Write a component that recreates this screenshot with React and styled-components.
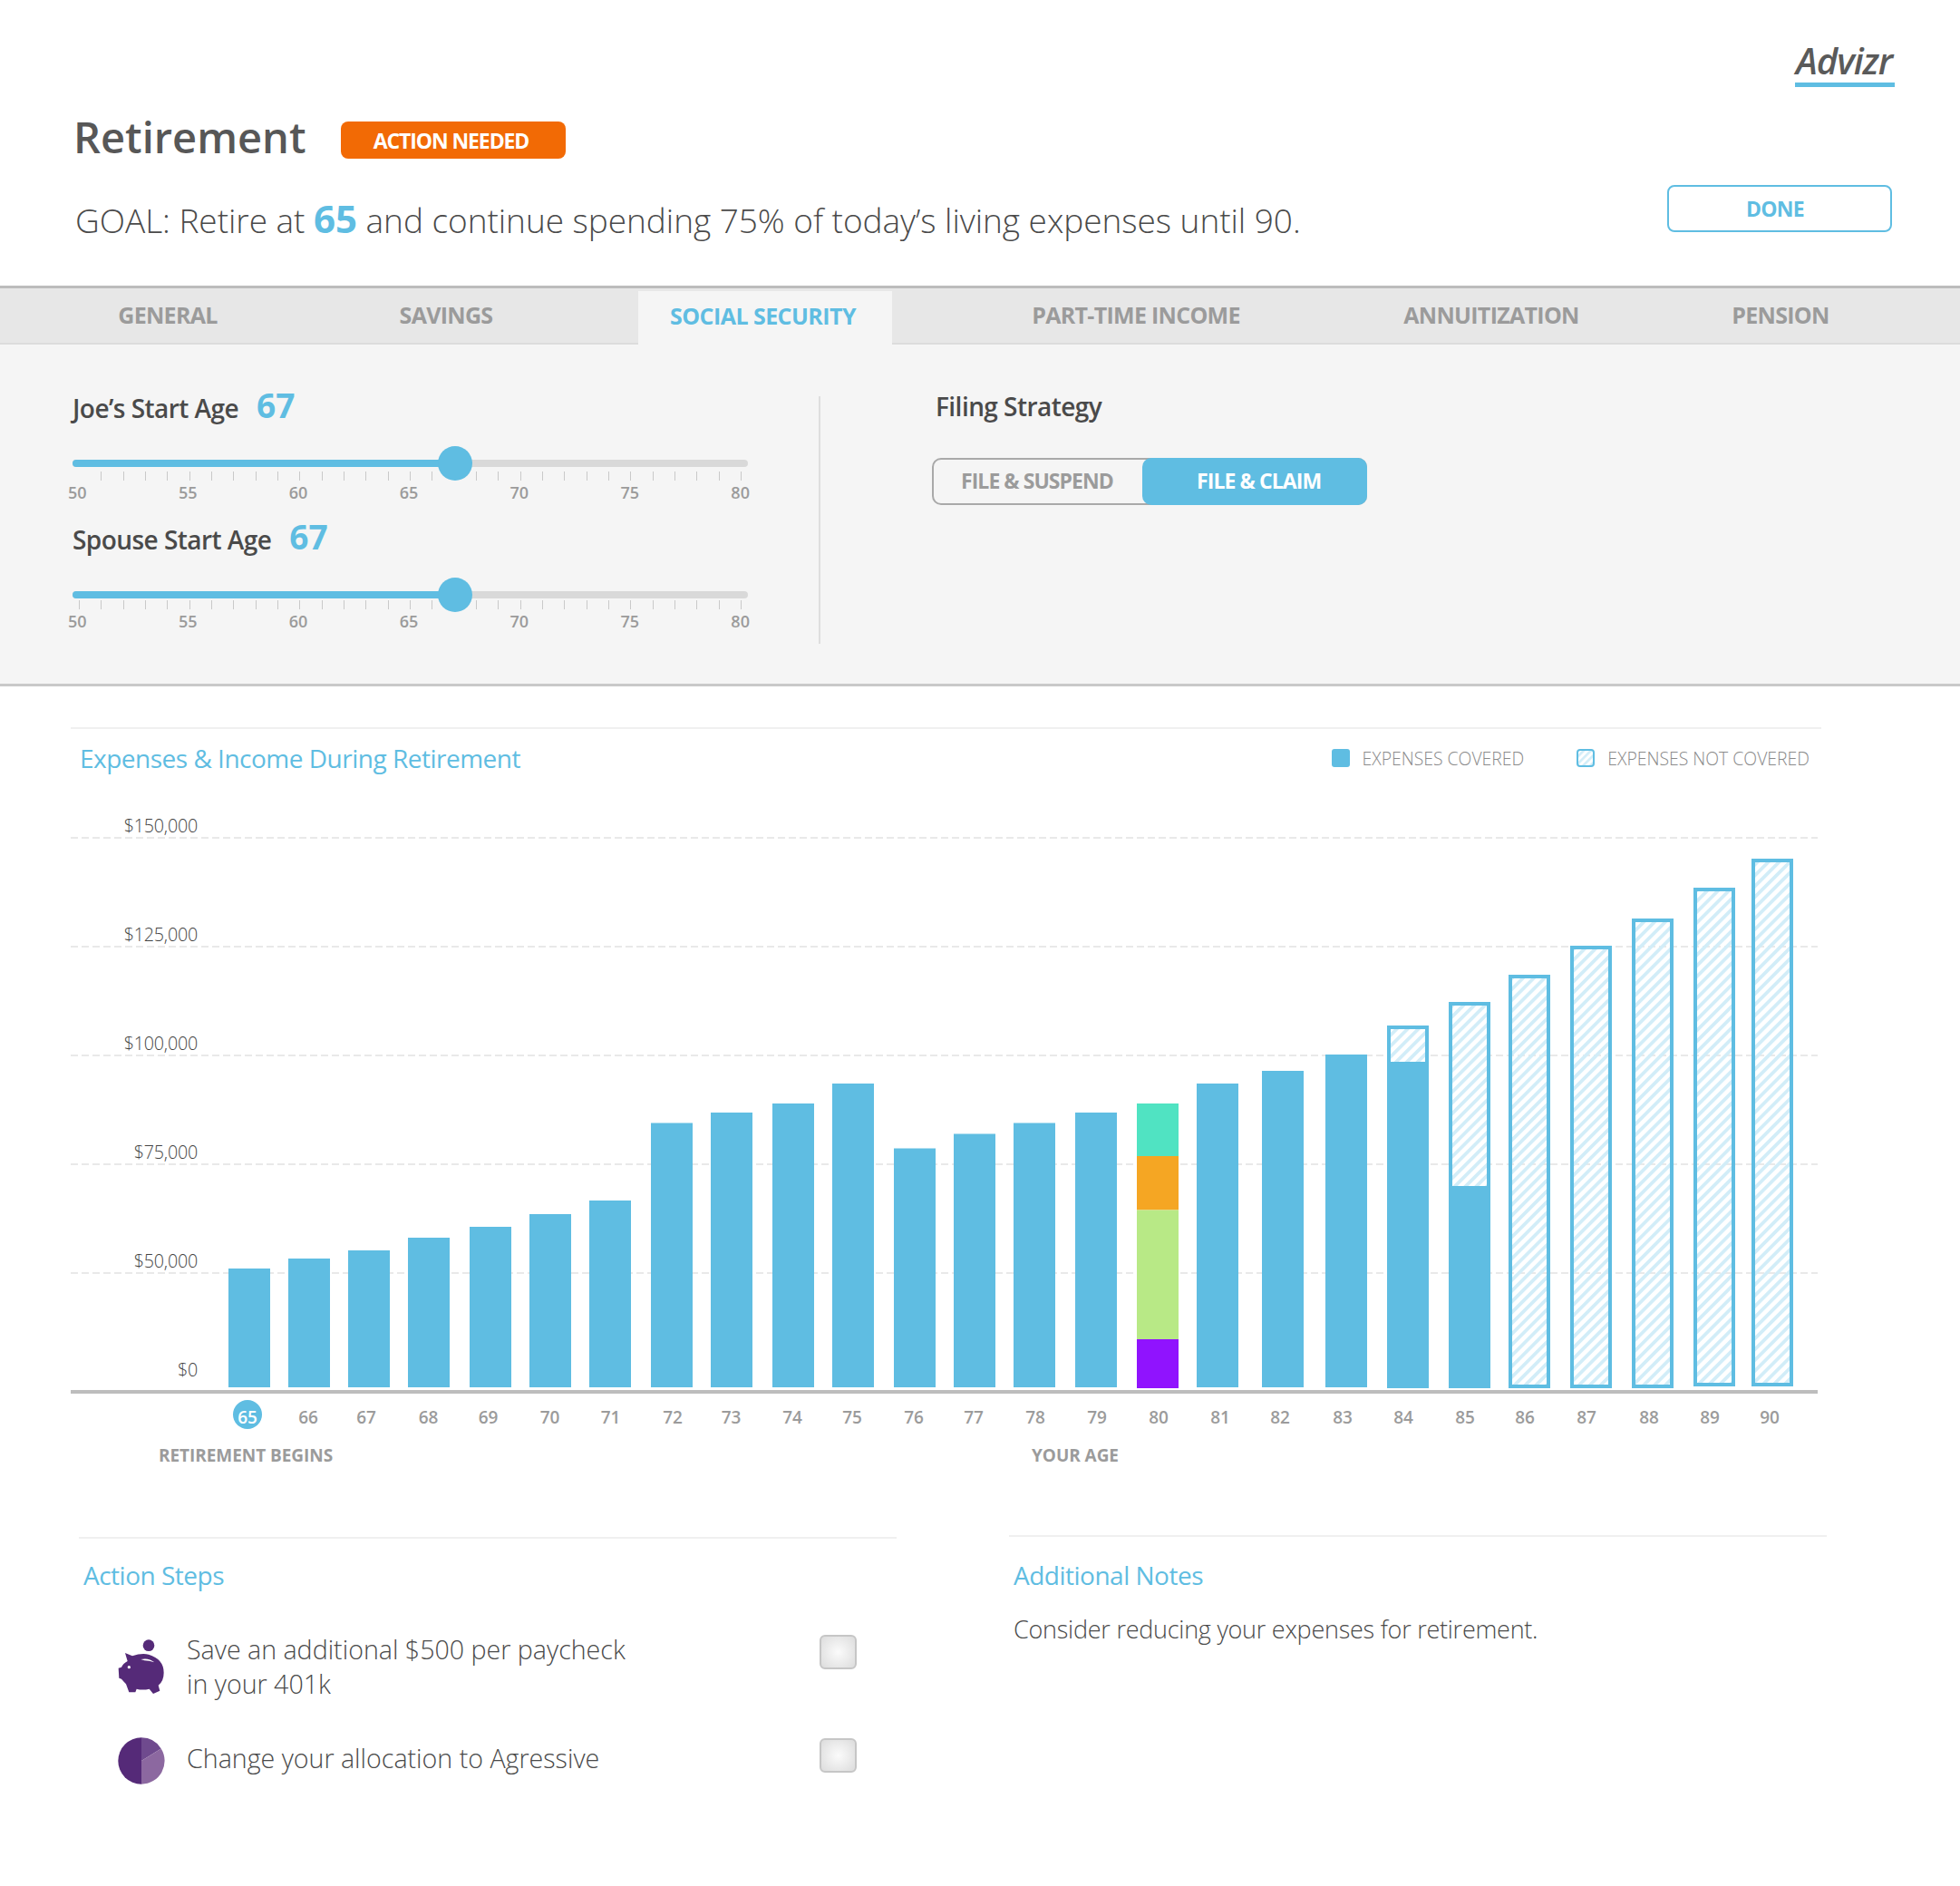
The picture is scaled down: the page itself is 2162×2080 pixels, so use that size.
import React from "react";
import styled, { createGlobalStyle } from "styled-components";

const BLUE = "#5fbde2";
const GREY = "#9b9b9b";
const DARK = "#4d4d4d";

const Global = createGlobalStyle`
  html, body { margin: 0; padding: 0; background: #fff; }
  body { font-family: "Open Sans", "Liberation Sans", sans-serif; color: ${DARK}; }
  * { box-sizing: border-box; }
`;

const Page = styled.div`
  width: 2162px;
  min-height: 2080px;
  background: #fff;
`;

const Header = styled.header`
  height: 315px;
  padding: 47px 72px 0 81px;
  display: flex;
  flex-direction: column;
`;
const LogoRow = styled.div`
  display: flex;
  justify-content: flex-end;
`;
const Logo = styled.div`
  width: 110px;
  height: 49px;
  border-bottom: 5px solid ${BLUE};
  padding-left: 1px;
  font-size: 40px;
  line-height: 40px;
  font-style: italic;
  font-weight: 600;
  letter-spacing: -1px;
  color: #5a5a5a;
  white-space: nowrap;
`;
const TitleRow = styled.div`
  display: flex;
  align-items: flex-start;
  margin-top: 35px;
  height: 44px;
`;
const Title = styled.h1`
  margin: -2px 0 0;
  font-size: 47px;
  line-height: 44px;
  font-weight: 600;
  color: #575757;
  white-space: nowrap;
  width: 295px;
`;
const Badge = styled.span`
  width: 248px;
  height: 41px;
  margin-top: 3px;
  padding-right: 5px;
  border-radius: 8px;
  background: #f26a05;
  color: #fff;
  font-size: 23px;
  font-weight: 700;
  letter-spacing: -1.1px;
  display: flex;
  align-items: center;
  justify-content: center;
`;
const GoalRow = styled.div`
  display: flex;
  align-items: flex-start;
  justify-content: space-between;
  margin-top: 29px;
`;
const Goal = styled.p`
  margin: 12px 0 0 2px;
  font-size: 37px;
  line-height: 50px;
  font-weight: 300;
  letter-spacing: -0.04px;
  color: #4a4a4a;
  white-space: nowrap;
`;
const GoalAge = styled.b`
  color: ${BLUE};
  font-weight: 700;
  font-size: 42px;
`;
const DoneButton = styled.button`
  width: 248px;
  height: 52px;
  margin-right: 3px;
  background: #fff;
  border: 2px solid ${BLUE};
  border-radius: 8px;
  color: ${BLUE};
  font: 700 23px "Open Sans", sans-serif;
  letter-spacing: -0.7px;
  padding: 0 10px 0 0;
`;

const TabBar = styled.nav`
  height: 65px;
  background: #e7e7e7;
  border-top: 3px solid #bcbcbc;
  border-bottom: 2px solid #dcdcdc;
  display: flex;
  align-items: flex-end;
`;
const Tab = styled.div`
  width: ${(p) => p.$w}px;
  margin-left: ${(p) => p.$ml || 0}px;
  height: ${(p) => (p.$active ? 59 : 60)}px;
  margin-bottom: ${(p) => (p.$active ? -2 : 0)}px;
  padding-right: ${(p) => (p.$active ? 5 : 0)}px;
  background: ${(p) => (p.$active ? "#f5f5f5" : "transparent")};
  color: ${(p) => (p.$active ? BLUE : GREY)};
  font-size: 25px;
  line-height: ${(p) => (p.$active ? 54 : 58)}px;
  font-weight: 700;
  letter-spacing: ${(p) => (p.$active ? -0.55 : -0.7)}px;
  text-align: center;
  white-space: nowrap;
`;

const Panel = styled.section`
  height: 377px;
  background: #f5f5f5;
  border-bottom: 3px solid #c9c9c9;
  display: flex;
  padding-top: 57px;
`;
const SliderColumn = styled.div`
  width: 905px;
  height: 273px;
  padding-left: 80px;
  border-right: 2px solid #dedede;
`;
const StrategyColumn = styled.div`
  padding-left: 123px;
`;
const Heading = styled.div`
  display: flex;
  align-items: baseline;
  height: 40px;
  margin-top: ${(p) => p.$mt || 0}px;
  margin-left: ${(p) => p.$ml || 0}px;
  font-size: 28px;
  line-height: 40px;
  font-weight: 600;
  color: #4a4a4a;
  letter-spacing: -0.55px;
  white-space: nowrap;
`;
const HeadingValue = styled.span`
  margin-left: 20px;
  font-size: 37px;
  font-weight: 700;
  color: ${BLUE};
  letter-spacing: 0;
`;
const Slider = styled.div`
  position: relative;
  width: 745px;
  height: 8px;
  margin-top: ${(p) => p.$mt}px;
  border-radius: 4px;
  background: #d9d9d9;
`;
const SliderFill = styled.div`
  height: 8px;
  border-radius: 4px 0 0 4px;
  background: ${BLUE};
`;
const Thumb = styled.div`
  position: absolute;
  top: -15px;
  width: 38px;
  height: 38px;
  margin-left: -19px;
  border-radius: 50%;
  background: ${BLUE};
`;
const Ticks = styled.div`
  display: flex;
  justify-content: space-between;
  width: 731px;
  height: 10px;
  margin: ${(p) => p.$mt}px 0 0 7px;
`;
const Tick = styled.i`
  width: 1px;
  height: 10px;
  background: ${(p) => (p.$hidden ? "transparent" : "#c9c9c9")};
`;
const ScaleLabels = styled.div`
  display: flex;
  justify-content: space-between;
  width: 752px;
  margin-left: -5px;
  margin-top: 3px;
  font-size: 18px;
  line-height: 20px;
  font-weight: 600;
  color: ${GREY};
`;
const Toggle = styled.div`
  display: flex;
  width: 480px;
  height: 52px;
  margin-top: 37px;
  border: 2px solid #a9a9a9;
  border-radius: 10px;
  position: relative;
`;
const ToggleOff = styled.div`
  width: 232px;
  line-height: 47px;
  padding-left: 30px;
  font-size: 23px;
  font-weight: 700;
  letter-spacing: -0.95px;
  color: ${GREY};
  white-space: nowrap;
`;
const ToggleOn = styled.div`
  position: absolute;
  top: -2px;
  right: -2px;
  bottom: -2px;
  width: 248px;
  border-radius: 10px;
  background: ${BLUE};
  color: #fff;
  font-size: 23px;
  font-weight: 700;
  letter-spacing: -0.9px;
  line-height: 51px;
  padding-left: 60px;
  white-space: nowrap;
`;

const ChartSection = styled.section`
  margin: 45px 0 0 78px;
  width: 1931px;
`;
const ChartHead = styled.div`
  display: flex;
  justify-content: space-between;
  height: 88px;
  padding: 12px 13px 0 10px;
  border-top: 2px solid #f0f0f0;
`;
const SectionTitle = styled.h2`
  margin: 0;
  font-size: 28px;
  line-height: 40px;
  font-weight: 400;
  letter-spacing: -0.5px;
  color: ${BLUE};
  white-space: nowrap;
`;
const Legend = styled.div`
  display: flex;
  gap: 58px;
`;
const LegendItem = styled.div`
  display: flex;
  align-items: center;
  height: 40px;
  gap: 14px;
  font-size: 19.4px;
  font-weight: 300;
  color: #8a8a8a;
  white-space: nowrap;
`;
const Swatch = styled.svg`
  display: block;
  flex: none;
`;
const ChartSvg = styled.svg`
  display: block;
`;
const YLabel = styled.text`
  font-size: 19.7px;
  font-weight: 300;
  fill: #444;
  text-anchor: end;
  letter-spacing: -0.2px;
`;
const XLabel = styled.text`
  font-size: 19px;
  font-weight: 600;
  fill: ${(p) => (p.$active ? "#fff" : GREY)};
  text-anchor: middle;
`;
const AxisCaption = styled.text`
  font-size: 19px;
  font-weight: 700;
  fill: ${GREY};
  letter-spacing: -0.05px;
`;

const Footer = styled.section`
  display: flex;
  margin: 75px 0 0 87px;
  gap: 124px;
`;
const FooterColumn = styled.div`
  width: 902px;
  margin-top: ${(p) => p.$mt || 0}px;
  border-top: 2px solid #f0f0f0;
  padding: ${(p) => (p.$right ? 22 : 20)}px 0 0 5px;
`;
const Notes = styled.p`
  margin: 21px 0 0;
  font-size: 27px;
  line-height: 38px;
  font-weight: 300;
  letter-spacing: -0.25px;
  color: #4a4a4a;
`;
const ActionRow = styled.div`
  display: flex;
  align-items: flex-start;
  margin-top: ${(p) => p.$mt}px;
  padding-left: 38px;
`;
const ActionIcon = styled.svg`
  display: block;
  flex: none;
  width: 52px;
  height: ${(p) => p.$h}px;
`;
const ActionText = styled.div`
  width: 722px;
  padding-left: 24px;
  margin-top: ${(p) => p.$top}px;
  font-size: 28.6px;
  line-height: 38px;
  font-weight: 300;
  color: #4a4a4a;
`;
const CheckBox = styled.div`
  width: 41px;
  height: 38px;
  margin-top: ${(p) => p.$top}px;
  border: 2px solid #c6c6c6;
  border-radius: 6px;
  background: radial-gradient(circle, #fbfbfb 0%, #dcdcdc 100%);
`;

const ages = Array.from({ length: 26 }, (_, i) => 65 + i);
const solid = [
  [252, 1399], [318, 1388], [384, 1379], [450, 1365], [518, 1353], [584, 1339], [650, 1324],
  [718, 1238.5], [784, 1227], [852, 1217], [918, 1195], [986, 1266.5], [1052, 1250.5], [1118, 1238.5],
  [1186, 1227], [1320, 1195], [1392, 1181], [1462, 1163],
];
const hatched = [
  { x: 1530, top: 1131, split: 1171 },
  { x: 1598, top: 1105, split: 1308 },
  { x: 1664, top: 1075, bottom: 1531 },
  { x: 1732, top: 1043, bottom: 1531 },
  { x: 1800, top: 1013, bottom: 1531 },
  { x: 1868, top: 979, bottom: 1529 },
  { x: 1932, top: 947, bottom: 1529 },
];
const stack = [
  ["#50e3c2", 1217, 1275],
  ["#f5a623", 1275, 1334.5],
  ["#b8e986", 1334.5, 1477],
  ["#9013fe", 1477, 1531],
];
const xPos = [273, 340, 404, 472.5, 538.5, 606.5, 673.5, 742, 806.5, 874, 940, 1008, 1074, 1142, 1210, 1278, 1346, 1412, 1481, 1548, 1616, 1682, 1750, 1819, 1886, 1952];
const gridRows = [
  ["$150,000", 924],
  ["$125,000", 1044],
  ["$100,000", 1164],
  ["$75,000", 1284],
  ["$50,000", 1404],
];

function Hatch({ id, size = 8.4, stripe = 3.8 }) {
  return (
    <pattern id={id} width={size} height={size} patternUnits="userSpaceOnUse" patternTransform="rotate(45)">
      <rect x="0" y="0" width={stripe} height={size} fill="#d2edf8" />
    </pattern>
  );
}

function Chart() {
  return (
    <ChartSvg width="1931" height="730" viewBox="78 890 1931 730">
      <defs>
        <Hatch id="hatch" />
      </defs>
      {gridRows.map(([label, y]) => (
        <g key={label}>
          <line x1="78" x2="2005" y1={y} y2={y} stroke="#e9e9e9" strokeWidth="2" strokeDasharray="8 4" />
          <YLabel x="218" y={y - 6}>{label}</YLabel>
        </g>
      ))}
      <YLabel x="218" y="1518">$0</YLabel>
      {solid.map(([x, top]) => (
        <rect key={x} x={x} y={top} width="46" height={1530 - top} fill={BLUE} />
      ))}
      {stack.map(([c, a, b]) => (
        <rect key={c} x="1254" y={a} width="46" height={b - a} fill={c} />
      ))}
      {hatched.map(({ x, top, split, bottom }) =>
        split ? (
          <g key={x}>
            <rect x={x} y={top} width="46" height={1531 - top} fill={BLUE} />
            <rect x={x + 4} y={top + 4} width="38" height={split - top - 4} fill="#fff" />
            <rect x={x + 4} y={top + 4} width="38" height={split - top - 4} fill="url(#hatch)" />
          </g>
        ) : (
          <rect key={x} x={x + 2} y={top + 2} width="42" height={bottom - top - 4} fill="url(#hatch)" stroke={BLUE} strokeWidth="4" />
        )
      )}
      <rect x="78" y="1533" width="1927" height="4" fill="#bdbdbd" />
      <circle cx="273" cy="1560" r="16" fill={BLUE} />
      {ages.map((a, i) => (
        <XLabel key={a} x={xPos[i]} y="1570" $active={a === 65}>{a}</XLabel>
      ))}
      <AxisCaption x="175" y="1612">RETIREMENT BEGINS</AxisCaption>
      <AxisCaption x="1138" y="1612">YOUR AGE</AxisCaption>
    </ChartSvg>
  );
}

function AgeSlider({ label, value, headingTop, trackTop, tickTop, hideFirst }) {
  const thumb = 422;
  return (
    <>
      <Heading $mt={headingTop}>
        {label}
        <HeadingValue>{value}</HeadingValue>
      </Heading>
      <Slider $mt={trackTop}>
        <SliderFill style={{ width: thumb }} />
        <Thumb style={{ left: thumb }} />
      </Slider>
      <Ticks $mt={tickTop}>
        {Array.from({ length: 31 }, (_, i) => (
          <Tick key={i} $hidden={(hideFirst && i === 0) || i === 17} />
        ))}
      </Ticks>
      <ScaleLabels>
        {[50, 55, 60, 65, 70, 75, 80].map((n) => (
          <span key={n}>{n}</span>
        ))}
      </ScaleLabels>
    </>
  );
}

function PiggyIcon() {
  return (
    <ActionIcon $h={60} viewBox="88 80 156 180">
      <circle cx="190" cy="100" r="19" fill="#552a78" />
      <path
        d="M112 125 L136 135 Q165 125 190 130 Q240 145 240 190 Q240 218 222 232 L227 250 L205 260 L192 244 Q170 249 150 244 L146 255 L125 255 L115 228 Q106 218 100 211 L92 208 L90 175 L100 172 Q105 160 120 152 Z"
        fill="#552a78"
      />
      <path d="M164 146 Q190 140 209 156 Q190 150 176 150 Z" fill="#fff" />
      <circle cx="125" cy="172" r="5" fill="#fff" />
    </ActionIcon>
  );
}

function PieIcon() {
  return (
    <ActionIcon $h={52} viewBox="-26 -26 52 52">
      <path d="M0 -25.7 A25.7 25.7 0 0 0 0 25.7 Z" fill="#552a78" />
      <path d="M0 0 L0 -25.7 A25.7 25.7 0 0 1 21.7 -13.6 Z" fill="#6f4a8e" />
      <path d="M0 0 L21.7 -13.6 A25.7 25.7 0 0 1 0 25.7 Z" fill="#8c68a0" />
    </ActionIcon>
  );
}

export default function App() {
  return (
    <Page>
      <Global />
      <Header>
        <LogoRow>
          <Logo>Advizr</Logo>
        </LogoRow>
        <TitleRow>
          <Title>Retirement</Title>
          <Badge>ACTION NEEDED</Badge>
        </TitleRow>
        <GoalRow>
          <Goal>
            GOAL: Retire at <GoalAge>65</GoalAge> and continue spending 75% of today’s living expenses until 90.
          </Goal>
          <DoneButton>DONE</DoneButton>
        </GoalRow>
      </Header>

      <TabBar>
        <Tab $w={370}>GENERAL</Tab>
        <Tab $w={244}>SAVINGS</Tab>
        <Tab $w={280} $ml={90} $active>SOCIAL SECURITY</Tab>
        <Tab $w={538}>PART-TIME INCOME</Tab>
        <Tab $w={246}>ANNUITIZATION</Tab>
        <Tab $w={392}>PENSION</Tab>
      </TabBar>

      <Panel>
        <SliderColumn>
          <AgeSlider label="Joe’s Start Age" value="67" headingTop={-10} trackTop={40} tickTop={5} hideFirst />
          <AgeSlider label="Spouse Start Age" value="67" headingTop={19} trackTop={40} tickTop={2} />
        </SliderColumn>
        <StrategyColumn>
          <Heading $mt={-9} $ml={4}>Filing Strategy</Heading>
          <Toggle>
            <ToggleOff>FILE &amp; SUSPEND</ToggleOff>
            <ToggleOn>FILE &amp; CLAIM</ToggleOn>
          </Toggle>
        </StrategyColumn>
      </Panel>

      <ChartSection>
        <ChartHead>
          <SectionTitle>Expenses &amp; Income During Retirement</SectionTitle>
          <Legend>
            <LegendItem>
              <Swatch width="20" height="20" viewBox="0 0 20 20">
                <rect width="20" height="20" rx="3" fill={BLUE} />
              </Swatch>
              EXPENSES COVERED
            </LegendItem>
            <LegendItem>
              <Swatch width="20" height="20" viewBox="0 0 20 20">
                <defs>
                  <Hatch id="hatch-key" size={5.6} stripe={2.6} />
                </defs>
                <rect x="1" y="1" width="18" height="18" rx="3" fill="url(#hatch-key)" stroke={BLUE} strokeWidth="2" />
              </Swatch>
              EXPENSES NOT COVERED
            </LegendItem>
          </Legend>
        </ChartHead>
        <Chart />
      </ChartSection>

      <Footer>
        <FooterColumn>
          <SectionTitle>Action Steps</SectionTitle>
          <ActionRow $mt={51}>
            <PiggyIcon />
            <ActionText $top={-8}>Save an additional $500 per paycheck<br />in your 401k</ActionText>
            <CheckBox $top={-5} />
          </ActionRow>
          <ActionRow $mt={40}>
            <PieIcon />
            <ActionText $top={4}>Change your allocation to Agressive</ActionText>
            <CheckBox $top={1} />
          </ActionRow>
        </FooterColumn>
        <FooterColumn $right $mt={-2}>
          <SectionTitle>Additional Notes</SectionTitle>
          <Notes>Consider reducing your expenses for retirement.</Notes>
        </FooterColumn>
      </Footer>
    </Page>
  );
}
